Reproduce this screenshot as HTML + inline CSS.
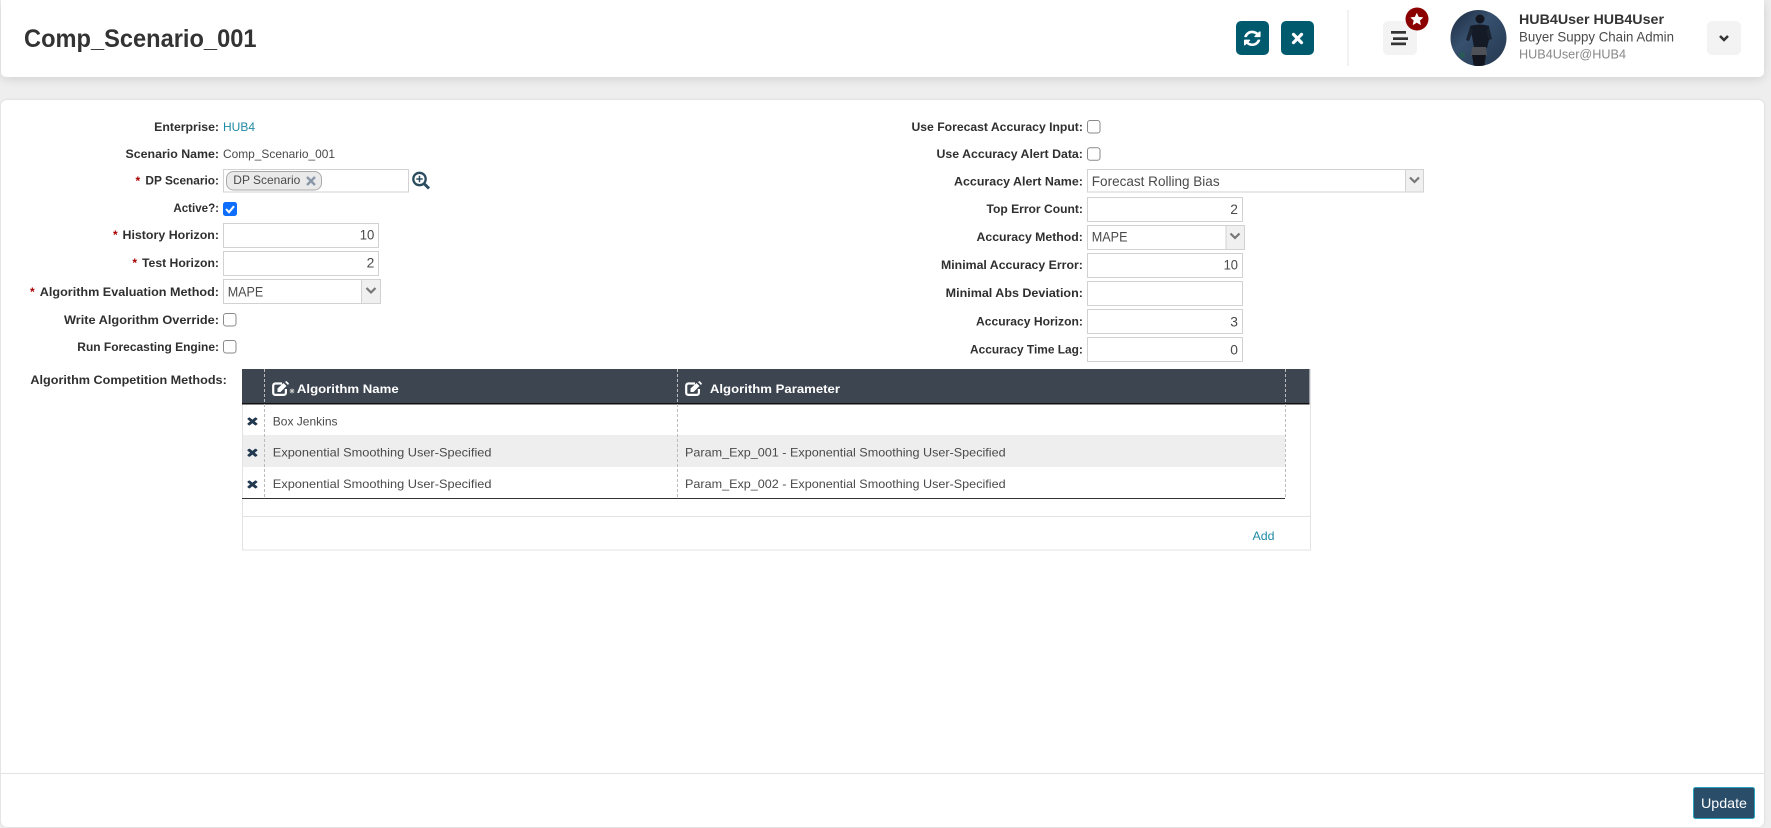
<!DOCTYPE html>
<html lang="en"><head><meta charset="utf-8"><title>Comp_Scenario_001</title>
<style>
html,body{margin:0;padding:0;width:1771px;height:828px;overflow:hidden;background:#eee}
.c{position:absolute;background:#fff;left:1px;width:1763px}
#h{top:0;height:77px;border-radius:0 0 5px 5px;box-shadow:0 2px 10px rgba(0,0,0,.12)}
#b{top:100px;height:727px;border-radius:6px;box-shadow:0 0 3px rgba(0,0,0,.1)}
svg{position:absolute;left:0;top:0}
text{font-family:"Liberation Sans",sans-serif;font-size:12px;fill:#4a4a4a}
.l{font-weight:bold;fill:#2f2f2f}
.v{font-size:14px;fill:#4a4a4a}
.i{fill:#fff;stroke:#d2d2d2}
.ar{fill:#f0f0f0;stroke:#d2d2d2}
.cv{fill:none;stroke:#777;stroke-width:2.2}
.cb{fill:#fff;stroke:#8a8a8a}
.st{fill:#a00;font-weight:bold}
.d{stroke:#bbb;stroke-dasharray:3 2;fill:none}
</style></head><body>
<div class="c" id="h"></div><div class="c" id="b"></div>
<svg width="1771" height="828" viewBox="0 0 1771 828" xmlns="http://www.w3.org/2000/svg">
<defs>
<linearGradient id="av" x1="0" y1="0" x2="1" y2="1"><stop offset="0" stop-color="#1d2a3e"/><stop offset=".4" stop-color="#36506e"/><stop offset="1" stop-color="#26384f"/></linearGradient>
<clipPath id="avc"><circle cx="1478.5" cy="38" r="28"/></clipPath>
<path id="x" d="M1490 1322q0 40-28 68l-136 136q-28 28-68 28t-68-28l-294-294-294 294q-28 28-68 28t-68-28l-136-136q-28-28-28-68t28-68l294-294-294-294q-28-28-28-68t28-68l136-136q28-28 68-28t68 28l294 294 294-294q28-28 68-28t68 28l136 136q28 28 28 68t-28 68l-294 294 294 294q28 28 28 68z"/>
<g id="edit" fill="none" stroke="#fff"><path stroke-width="2.200" d="M10 2.500H3.500Q1.200 2.500 1.200 5v6.500q0 2.400 2.300 2.400h8q2.400 0 2.400-2.400V8"/><path fill="#fff" stroke="none" d="M5.500 7.500l6-5.500 3 3-6 6H5.500zM13 1l1.500-1 2.500 2.500-1 1.500z"/></g>
</defs>

<!-- header -->
<text x="24" y="47" textLength="232.500" lengthAdjust="spacingAndGlyphs" style="font-size:25px;font-weight:bold;fill:#333">Comp_Scenario_001</text>
<rect x="1236" y="21" width="33" height="34" rx="5" fill="#005a6e"/>
<g transform="translate(1242.600 29.400) scale(.0108 .01)" fill="#fff"><path d="M1639 1056q0 5-1 7-64 268-268 434.500t-478 166.500q-146 0-282.500-55t-243.500-157l-129 129q-19 19-45 19t-45-19-19-45v-448q0-26 19-45t45-19h448q26 0 45 19t19 45-19 45l-137 137q71 66 161 102t187 36q134 0 250-65t186-179q11-17 53-117 8-23 30-23h192q13 0 22.500 9.500t9.500 22.500zm25-800v448q0 26-19 45t-45 19h-448q-26 0-45-19t-19-45 19-45l138-138q-148-137-349-137-134 0-250 65t-186 179q-11 17-53 117-8 23-30 23h-199q-13 0-22.500-9.500t-9.500-22.500v-7q65-268 270-434.500t480-166.500q146 0 284 55.500t245 156.500l130-129q19-19 45-19t45 19 19 45z"/></g>
<rect x="1281" y="21" width="33" height="34" rx="5" fill="#005a6e"/>
<path d="M1293.500 34.400l8 8.200M1301.500 34.400l-8 8.200" stroke="#fff" stroke-width="3.200" stroke-linecap="round"/>
<rect x="1347.500" y="10" width="1" height="56" fill="#e6e6e6"/>
<rect x="1383" y="21" width="34" height="34" rx="5" fill="#f3f3f3"/>
<rect x="1391" y="31" width="15" height="2.700" fill="#333"/><rect x="1393" y="37.300" width="15" height="2.700" fill="#333"/><rect x="1391" y="42.500" width="15" height="2.700" fill="#333"/>
<circle cx="1417" cy="19" r="11.500" fill="#8b0000"/>
<path d="M1416.800 13.200l1.800 3.900 4.300.5-3.200 2.900.9 4.200-3.800-2.200-3.800 2.200.9-4.200-3.200-2.900 4.300-.5z" fill="#fff" stroke="#fff" stroke-width=".5" stroke-linejoin="round"/>
<circle cx="1478.500" cy="38" r="28" fill="url(#av)"/>
<g clip-path="url(#avc)"><circle cx="1480" cy="19" r="4.500" fill="#14161f"/><path d="M1470 26q10-3 19 0l1 10-3 12h-13l-2-12z" fill="#141a26"/><path d="M1470 27l-4 13 3 1 4-10zM1489 27l3 12-3 1-3-9z" fill="#1a2230"/><path d="M1472 47h14l1 9h-16z" fill="#4e5158"/><path d="M1472 55h14l-2 12h-10z" fill="#12151d"/><circle cx="1462" cy="55" r="3" fill="#2a5a58"/></g>
<text x="1519" y="24" textLength="145" lengthAdjust="spacingAndGlyphs" style="font-size:14px;font-weight:bold;fill:#333">HUB4User HUB4User</text>
<text x="1519" y="41.500" textLength="155" lengthAdjust="spacingAndGlyphs" style="font-size:14px;fill:#4a4a4a">Buyer Suppy Chain Admin</text>
<text x="1519" y="58.500" textLength="107" lengthAdjust="spacingAndGlyphs" style="font-size:13px;fill:#888">HUB4User@HUB4</text>
<rect x="1707" y="21" width="34" height="34" rx="5" fill="#f3f3f3"/>
<path d="M1720 36l4 4 4-4" fill="none" stroke="#333" stroke-width="2.500"/>

<!-- left labels -->
<text class="l" x="154.200" y="131" textLength="64.800" lengthAdjust="spacingAndGlyphs">Enterprise:</text>
<text class="l" x="125.500" y="158" textLength="93.500" lengthAdjust="spacingAndGlyphs">Scenario Name:</text>
<text class="st" x="135.500" y="185">*</text>
<text class="l" x="145.400" y="184.700" textLength="73.600" lengthAdjust="spacingAndGlyphs">DP Scenario:</text>
<text class="l" x="173.400" y="212" textLength="45.600" lengthAdjust="spacingAndGlyphs">Active?:</text>
<text class="st" x="113" y="239">*</text>
<text class="l" x="122.500" y="239" textLength="96.500" lengthAdjust="spacingAndGlyphs">History Horizon:</text>
<text class="st" x="132.400" y="267">*</text>
<text class="l" x="142" y="267" textLength="77" lengthAdjust="spacingAndGlyphs">Test Horizon:</text>
<text class="st" x="30" y="296">*</text>
<text class="l" x="39.800" y="296" textLength="179.200" lengthAdjust="spacingAndGlyphs">Algorithm Evaluation Method:</text>
<text class="l" x="64" y="324" textLength="155" lengthAdjust="spacingAndGlyphs">Write Algorithm Override:</text>
<text class="l" x="77.300" y="351" textLength="141.700" lengthAdjust="spacingAndGlyphs">Run Forecasting Engine:</text>

<!-- left values -->
<text x="223" y="131" textLength="32" lengthAdjust="spacingAndGlyphs" style="fill:#1f8aa5">HUB4</text>
<text x="223" y="158" textLength="112" lengthAdjust="spacingAndGlyphs">Comp_Scenario_001</text>
<rect class="i" x="223.500" y="169.500" width="185" height="22.500"/>
<rect x="226.500" y="171.500" width="95" height="18.500" rx="7" fill="#eaeaea" stroke="#aaa"/>
<text x="233.300" y="184" textLength="67" lengthAdjust="spacingAndGlyphs">DP Scenario</text>
<path d="M307 177l8 8M315 177l-8 8" stroke="#8a97a8" stroke-width="2.400"/>
<g fill="none" stroke="#2b4c5e"><circle cx="419.500" cy="179" r="6.200" stroke-width="2.300"/><path d="M424 183.500l5 5" stroke-width="3"/><path d="M416.300 179h6.400M419.500 175.800v6.400" stroke-width="1.500"/></g>
<rect x="223" y="202" width="14" height="14" rx="2.500" fill="#0d6efd"/>
<path d="M226 209l3 3.200 5-6" fill="none" stroke="#fff" stroke-width="2"/>
<rect class="i" x="223.500" y="223.500" width="155" height="24"/>
<text class="v" x="359.700" y="239.500" textLength="14.600" lengthAdjust="spacingAndGlyphs">10</text>
<rect class="i" x="223.500" y="251.500" width="155" height="24"/>
<text class="v" x="366.600" y="267.500" textLength="7.700" lengthAdjust="spacingAndGlyphs">2</text>
<rect class="i" x="223.500" y="279.500" width="157" height="24"/>
<rect class="ar" x="361.500" y="279.500" width="19" height="24"/>
<path class="cv" d="M366.500 288l4.500 4.500 4.500-4.500"/>
<text class="v" x="227.700" y="296.500" textLength="35.600" lengthAdjust="spacingAndGlyphs">MAPE</text>
<rect class="cb" x="223.500" y="313.500" width="12.500" height="12.500" rx="2.500"/>
<rect class="cb" x="223.500" y="340.500" width="12.500" height="12.500" rx="2.500"/>

<!-- right labels -->
<text class="l" x="911.500" y="131" textLength="171.400" lengthAdjust="spacingAndGlyphs">Use Forecast Accuracy Input:</text>
<text class="l" x="936.500" y="158" textLength="146.400" lengthAdjust="spacingAndGlyphs">Use Accuracy Alert Data:</text>
<text class="l" x="954" y="185.500" textLength="128.900" lengthAdjust="spacingAndGlyphs">Accuracy Alert Name:</text>
<text class="l" x="986.500" y="213" textLength="96.400" lengthAdjust="spacingAndGlyphs">Top Error Count:</text>
<text class="l" x="976.500" y="241" textLength="106.400" lengthAdjust="spacingAndGlyphs">Accuracy Method:</text>
<text class="l" x="941" y="269" textLength="141.900" lengthAdjust="spacingAndGlyphs">Minimal Accuracy Error:</text>
<text class="l" x="945.700" y="297" textLength="137.200" lengthAdjust="spacingAndGlyphs">Minimal Abs Deviation:</text>
<text class="l" x="976" y="325.500" textLength="106.900" lengthAdjust="spacingAndGlyphs">Accuracy Horizon:</text>
<text class="l" x="970" y="353.500" textLength="112.900" lengthAdjust="spacingAndGlyphs">Accuracy Time Lag:</text>

<!-- right values -->
<rect class="cb" x="1087.500" y="120.500" width="12.500" height="12.500" rx="2.500"/>
<rect class="cb" x="1087.500" y="147.700" width="12.500" height="12.500" rx="2.500"/>
<rect class="i" x="1087.500" y="169.500" width="336" height="22.500"/>
<rect class="ar" x="1405.500" y="169.500" width="18" height="22.500"/>
<path class="cv" d="M1410 177.500l4.500 4.500 4.500-4.500"/>
<text class="v" x="1091.800" y="186" textLength="127.800" lengthAdjust="spacingAndGlyphs">Forecast Rolling Bias</text>
<rect class="i" x="1087.500" y="197.500" width="155" height="24"/>
<text class="v" x="1230.300" y="214" textLength="7.700" lengthAdjust="spacingAndGlyphs">2</text>
<rect class="i" x="1087.500" y="225.500" width="157" height="24"/>
<rect class="ar" x="1226" y="225.500" width="18.500" height="24"/>
<path class="cv" d="M1230.500 233.500l4.500 4.500 4.500-4.500"/>
<text class="v" x="1091.800" y="241.500" textLength="35.700" lengthAdjust="spacingAndGlyphs">MAPE</text>
<rect class="i" x="1087.500" y="253.500" width="155" height="24"/>
<text class="v" x="1223.600" y="269.500" textLength="14.400" lengthAdjust="spacingAndGlyphs">10</text>
<rect class="i" x="1087.500" y="281.500" width="155" height="24"/>
<rect class="i" x="1087.500" y="309.500" width="155" height="24"/>
<text class="v" x="1230.300" y="326.500" textLength="7.700" lengthAdjust="spacingAndGlyphs">3</text>
<rect class="i" x="1087.500" y="337.500" width="155" height="24"/>
<text class="v" x="1230.300" y="354.500" textLength="7.700" lengthAdjust="spacingAndGlyphs">0</text>

<!-- table -->
<text class="l" x="30.400" y="384" textLength="196.400" lengthAdjust="spacingAndGlyphs">Algorithm Competition Methods:</text>
<rect x="242.500" y="369.500" width="1068" height="180.500" fill="#fff" stroke="#e3e3e3"/>
<rect x="242" y="369" width="1067.500" height="34" fill="#3c4550"/>
<rect x="242" y="403" width="1067.500" height="1.500" fill="#111"/>
<rect x="243" y="435" width="1042" height="32" fill="#eee"/>
<rect x="242" y="498" width="1043" height="1" fill="#333"/>
<rect x="243" y="516" width="1067" height="1" fill="#e3e3e3"/>
<path class="d" d="M264.500 369V498M677.500 369V498M1285.500 369V498"/>
<use href="#edit" transform="translate(272 381)"/>
<path d="M289.500 391h5M292 388.500v5M290.200 389.200l3.600 3.600M293.800 389.200l-3.600 3.600" stroke="#ccc" stroke-width=".8"/>
<text x="296.900" y="393" textLength="101.800" lengthAdjust="spacingAndGlyphs" style="font-weight:bold;fill:#fff">Algorithm Name</text>
<use href="#edit" transform="translate(685 381)"/>
<text x="709.900" y="393" textLength="130.100" lengthAdjust="spacingAndGlyphs" style="font-weight:bold;fill:#fff">Algorithm Parameter</text>
<use href="#x" transform="translate(244.800 414.900) scale(.0085 .0068)" fill="#22384f"/>
<use href="#x" transform="translate(244.800 446.200) scale(.0085 .0068)" fill="#22384f"/>
<use href="#x" transform="translate(244.800 477.900) scale(.0085 .0068)" fill="#22384f"/>
<text x="272.800" y="425.500" textLength="64.700" lengthAdjust="spacingAndGlyphs">Box Jenkins</text>
<text x="272.800" y="456.500" textLength="218.700" lengthAdjust="spacingAndGlyphs">Exponential Smoothing User-Specified</text>
<text x="272.800" y="488" textLength="218.700" lengthAdjust="spacingAndGlyphs">Exponential Smoothing User-Specified</text>
<text x="685" y="456.500" textLength="320.600" lengthAdjust="spacingAndGlyphs">Param_Exp_001 - Exponential Smoothing User-Specified</text>
<text x="685" y="488" textLength="320.600" lengthAdjust="spacingAndGlyphs">Param_Exp_002 - Exponential Smoothing User-Specified</text>
<text x="1252.500" y="540" textLength="22" lengthAdjust="spacingAndGlyphs" style="fill:#1f8aa5">Add</text>

<!-- footer -->
<rect x="1" y="773" width="1763" height="1" fill="#e3e3e3"/>
<rect x="1693.500" y="787.500" width="61" height="31" rx="2" fill="#2a4d69" stroke="#2aa3c0"/>
<text x="1701" y="808" textLength="46" lengthAdjust="spacingAndGlyphs" style="font-size:14px;fill:#fff">Update</text>
</svg>
</body></html>
